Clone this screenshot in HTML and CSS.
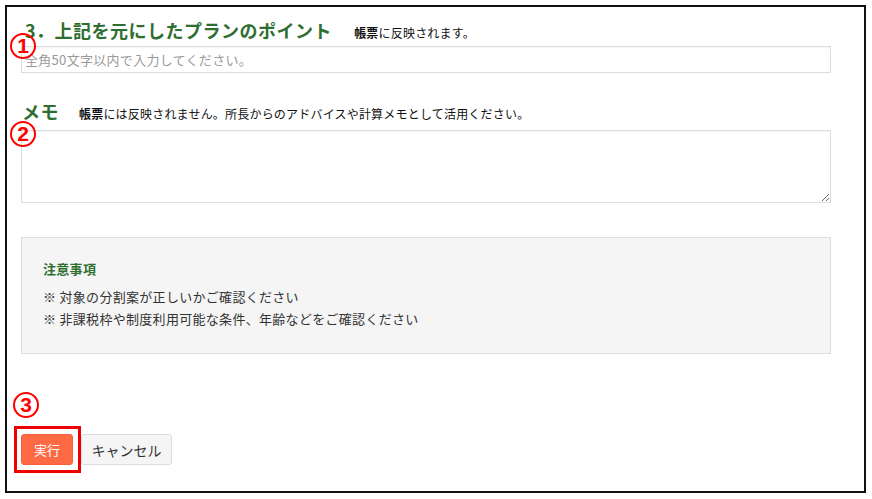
FILE: index.html
```html
<!DOCTYPE html>
<html lang="ja">
<head>
    <meta charset="utf-8">
    <title>プランのポイント</title>
    <link rel="stylesheet" href="styles.css">
</head>
<body>
    <section id="panel">
        <div class="field">
            <h2 class="title">3．上記を元にしたプランのポイント<span class="note"><b>帳票</b>に反映されます。</span></h2>
            <span class="mark mark1">1</span>
            <input type="text" class="textbox" placeholder="全角50文字以内で入力してください。">
        </div>
        <div class="field memo">
            <h2 class="title">メモ<span class="note"><b>帳票</b>には反映されません。所長からのアドバイスや計算メモとして活用ください。</span></h2>
            <span class="mark mark2">2</span>
            <textarea class="memobox"></textarea>
        </div>
        <div class="caution">
            <h3>注意事項</h3>
            <p>※ 対象の分割案が正しいかご確認ください</p>
            <p>※ 非課税枠や制度利用可能な条件、年齢などをご確認ください</p>
        </div>
        <div class="buttons">
            <span class="mark mark3">3</span>
            <span class="highlight"></span>
            <input type="button" class="btn run" value="実行">
            <input type="button" class="btn cancel" value="キャンセル">
        </div>
    </section>
</body>
</html>
```

FILE: styles.css
```css
body {
    margin: 5px 6px 6px 5px;
    font-family: "Noto Sans CJK JP", "Noto Sans", sans-serif;
    color: #333;
}
#panel {
    border: 2px solid #111;
    padding: 10px 33px 26px 14px;
    height: 488px;
    box-sizing: border-box;
}
.field {
    position: relative;
}
.title {
    margin: 0;
    font-size: 18px;
    line-height: 26px;
    height: 26px;
    font-weight: bold;
    color: #2e6e30;
    display: flex;
    align-items: baseline;
    padding-left: 4px;
    letter-spacing: 0.5px;
}
.memo .title {
    padding-left: 1px;
}
.note {
    font-size: 12px;
    line-height: 16px;
    color: #111;
    font-weight: normal;
    margin-left: 22px;
    letter-spacing: 0.2px;
}
.memo .note {
    margin-left: 20px;
}
.textbox {
    display: block;
    margin-top: 3px;
    width: 100%;
    height: 27px;
    box-sizing: border-box;
    border: 1px solid #ddd;
    padding: 0 3px;
    font: 13px "Noto Sans CJK JP", sans-serif;
    letter-spacing: 0.3px;
    box-shadow: inset 0 1px 1px rgba(0,0,0,.04);
}
.textbox::placeholder {
    color: #999;
}
.memo {
    margin-top: 25px;
}
.memobox {
    display: block;
    margin-top: 6px;
    width: 100%;
    height: 73px;
    box-sizing: border-box;
    border: 1px solid #ddd;
    box-shadow: inset 0 1px 1px rgba(0,0,0,.04);
}
.caution {
    margin-top: 34px;
    height: 117px;
    box-sizing: border-box;
    background: #f5f5f5;
    border: 1px solid #ddd;
    padding: 21px 21px 0;
}
.caution h3 {
    margin: 0 0 7px;
    font-size: 13px;
    line-height: 20px;
    color: #2e6e30;
    letter-spacing: 0.3px;
}
.caution p {
    margin: 0;
    font-size: 13px;
    line-height: 22px;
    color: #333;
    letter-spacing: 0.3px;
}
.buttons {
    position: relative;
    margin-top: 80px;
    display: flex;
    gap: 8px;
}
.btn {
    height: 31px;
    border-radius: 3px;
    font: 13px "Noto Sans CJK JP", sans-serif;
    padding: 0;
}
.run {
    width: 52px;
    background: #ff6a45;
    border: 1px solid #f5613c;
    color: #fff;
}
.cancel {
    width: 91px;
    background: #f5f5f5;
    border: 1px solid #ddd;
    color: #333;
    font-size: 14px;
}
/* annotation marks */
.mark {
    position: absolute;
    width: 22px;
    height: 22px;
    border: 2px solid #f00;
    border-radius: 50%;
    color: #f00;
    font: bold 21px/22px "Liberation Sans", sans-serif;
    text-align: center;
}
.mark1 {
    left: -11px;
    top: 16px;
}
.mark2 {
    left: -11px;
    top: 23px;
}
.mark3 {
    left: -8px;
    top: -42px;
}
.highlight {
    position: absolute;
    left: -7px;
    top: -8px;
    width: 61px;
    height: 41px;
    border: 3px solid #e00;
}
```
